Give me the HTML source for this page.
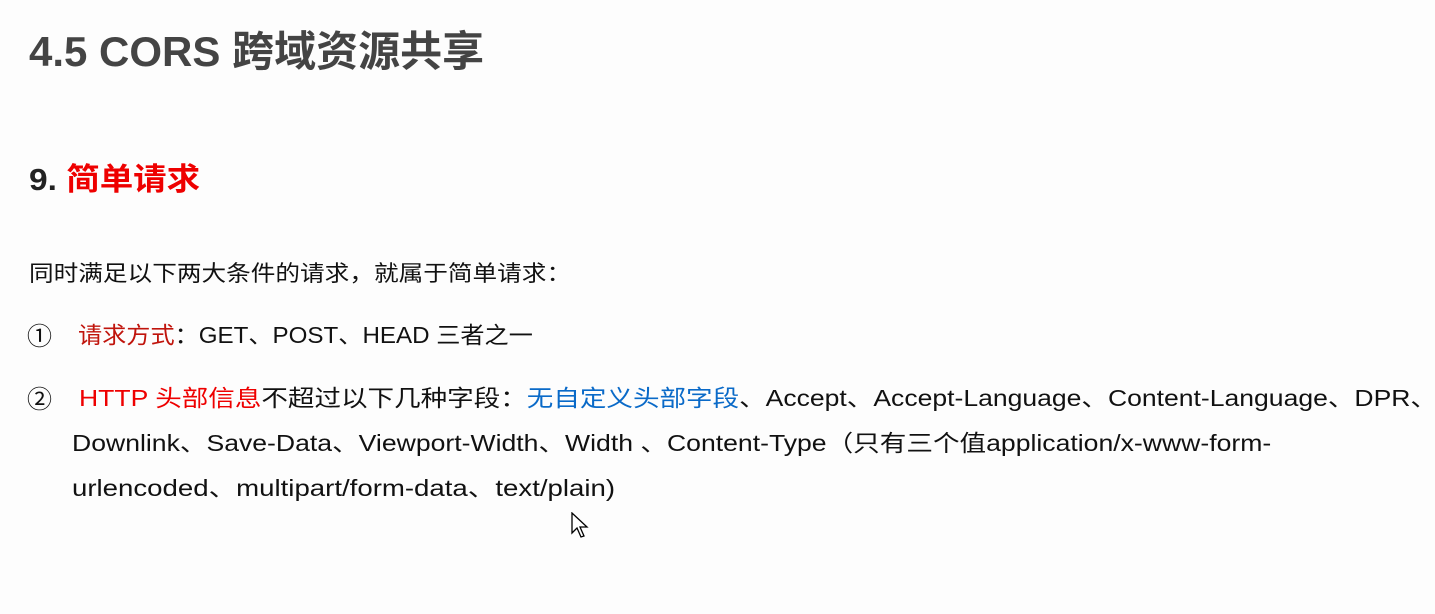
<!DOCTYPE html>
<html><head><meta charset="utf-8"><style>
body{margin:0;width:1435px;height:614px;background:#fdfdfd;overflow:hidden;position:relative;font-family:"Liberation Sans","Noto Sans CJK SC",sans-serif;color:#111}
.l{position:absolute;white-space:nowrap;line-height:1;transform-origin:0 0}
.r{color:#e00}.dr{color:#c0140c}.b{color:#0a6ac8}
</style></head><body>
<div class="l" style="left:29px;top:31px;font-size:42px;font-weight:bold;color:#444">4.5 CORS 跨域资源共享</div>
<div class="l" style="left:29px;top:164px;font-size:31px;font-weight:bold;color:#222;transform:scaleX(1.08)">9. <span class="r">简单请求</span></div>
<div class="l" style="left:29px;top:263px;font-size:22px;transform:scaleX(1.12)">同时满足以下两大条件的请求，就属于简单请求：</div>
<div class="l" style="left:27px;top:325px;font-size:25px">①</div>
<div class="l" style="left:78px;top:324px;font-size:23px;transform:scaleX(1.05)"><span class="dr">请求方式</span>：GET、POST、HEAD 三者之一</div>
<div class="l" style="left:27px;top:388px;font-size:25px">②</div>
<div class="l" style="left:79px;top:387px;font-size:23px;transform:scaleX(1.154)"><span class="r">HTTP 头部信息</span>不超过以下几种字段：<span class="b">无自定义头部字段</span>、Accept、Accept-Language、Content-Language、DPR、</div>
<div class="l" style="left:72px;top:432px;font-size:23px;transform:scaleX(1.156)">Downlink、Save-Data、Viewport-Width、Width 、Content-Type（只有三个值application/x-www-form-</div>
<div class="l" style="left:72px;top:477px;font-size:23px;transform:scaleX(1.2)">urlencoded、multipart/form-data、text/plain)</div>
<svg style="position:absolute;left:571px;top:512px" width="20" height="30" viewBox="0 0 20 30"><path d="M1 1 L1 21 L6 16 L10 25 L13 24 L9 15 L16 15 Z" fill="#fff" stroke="#000" stroke-width="1.3"/></svg>
</body></html>
